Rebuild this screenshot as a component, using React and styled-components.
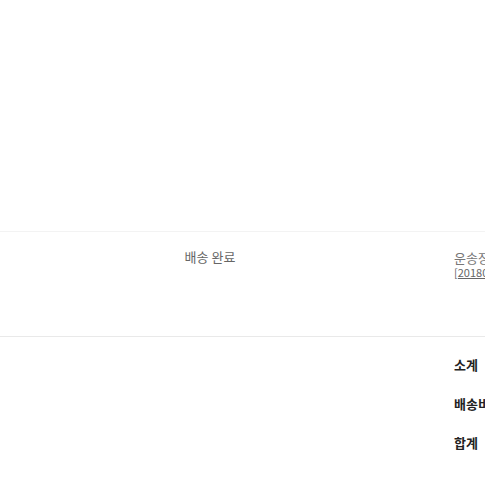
import React from 'react';
import styled, { createGlobalStyle } from 'styled-components';

const GlobalStyle = createGlobalStyle`
  html, body {
    margin: 0;
    padding: 0;
    background: #fff;
    overflow: hidden;
  }
  body {
    font-family: 'Noto Sans CJK KR', 'Noto Sans', sans-serif;
    color: #222;
  }
`;

const Page = styled.div`
  width: 760px;
  padding-top: 231px;
`;

const OrderRow = styled.div`
  display: flex;
  height: 104px;
  border-top: 1px solid #f3f3f3;
  border-bottom: 1px solid #e9e9e9;
`;

const Cell = styled.div`
  width: ${({ $w }) => $w}px;
  flex: none;
  padding-top: ${({ $pt }) => $pt || 11}px;
  padding-left: ${({ $pl }) => $pl || 0}px;
  box-sizing: border-box;
  text-align: ${({ $align }) => $align || 'left'};
`;

const Status = styled.span`
  font-size: 13px;
  line-height: 20px;
  color: #666;
`;

const TrackLabel = styled.div`
  font-size: 13px;
  line-height: 14px;
  color: #777;
  white-space: nowrap;
`;

const TrackLink = styled.a`
  display: block;
  font-size: 11px;
  line-height: 14px;
  color: #666;
  text-decoration: underline;
  white-space: nowrap;
`;

const Summary = styled.div`
  display: flex;
  flex-direction: column;
  gap: 19px;
  padding: 18px 0 0 454px;
`;

const SumLabel = styled.div`
  font-size: 13px;
  line-height: 20px;
  font-weight: 700;
  color: #222;
  white-space: nowrap;
`;

export default function App() {
  return (
    <>
      <GlobalStyle />
      <Page>
        <OrderRow>
          <Cell $w={140} />
          <Cell $w={140} $align="center">
            <Status>배송 완료</Status>
          </Cell>
          <Cell $w={174} />
          <Cell $w={200} $pt={19}>
            <TrackLabel>운송장정보</TrackLabel>
            <TrackLink href="#">[20180312-0001]</TrackLink>
          </Cell>
        </OrderRow>
        <Summary>
          <SumLabel>소계</SumLabel>
          <SumLabel>배송비</SumLabel>
          <SumLabel>합계</SumLabel>
        </Summary>
      </Page>
    </>
  );
}
